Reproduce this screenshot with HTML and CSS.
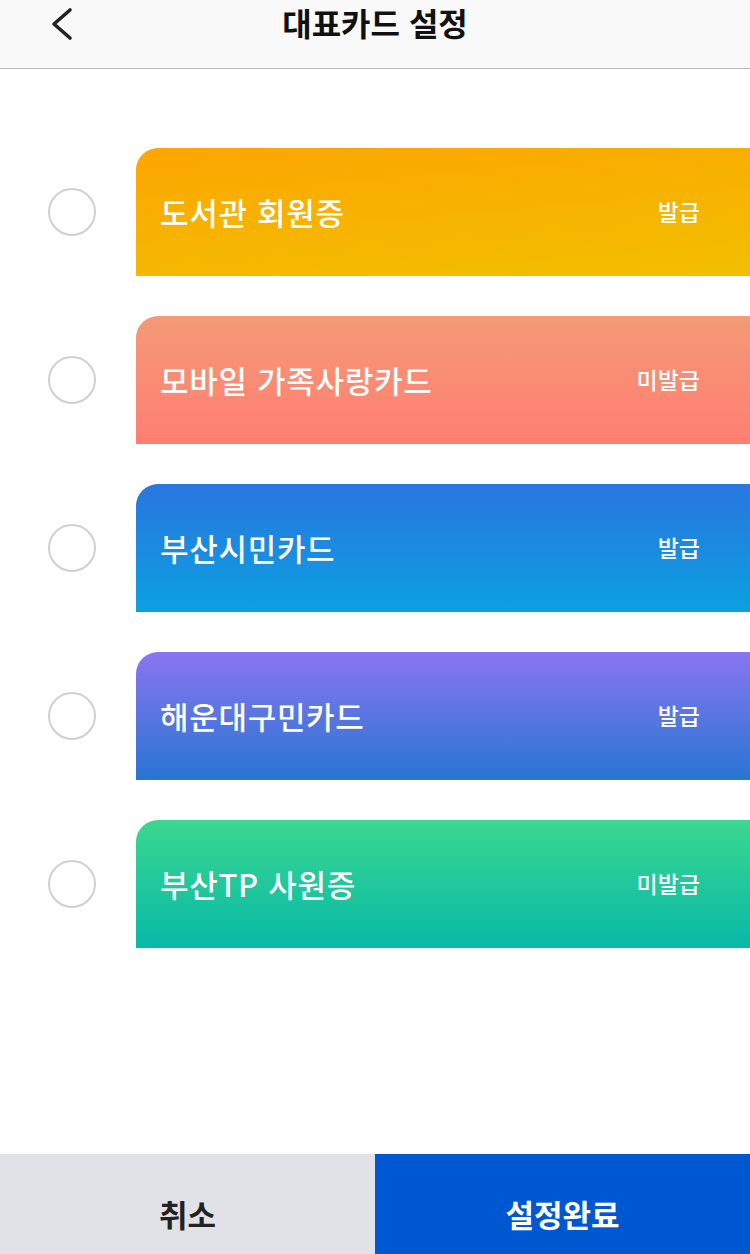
FILE: index.html
```html
<!DOCTYPE html>
<html lang="ko">
<head>
<meta charset="utf-8">
<link rel="stylesheet" href="styles.css">
</head>
<body>
<div class="page">
  <header class="header">
    <button class="back" aria-label="뒤로">
      <svg width="24" height="34" viewBox="0 0 24 34"><path d="M19 3 L3 17 L19 31" fill="none" stroke="#222" stroke-width="3.6" stroke-linecap="round" stroke-linejoin="round"/></svg>
    </button>
    <h1 class="title">대표카드 설정</h1>
  </header>
  <main class="list">
    <div class="row">
      <span class="radio"></span>
      <div class="card c1"><span class="name">도서관 회원증</span><span class="status">발급</span></div>
    </div>
    <div class="row">
      <span class="radio"></span>
      <div class="card c2"><span class="name">모바일 가족사랑카드</span><span class="status">미발급</span></div>
    </div>
    <div class="row">
      <span class="radio"></span>
      <div class="card c3"><span class="name">부산시민카드</span><span class="status">발급</span></div>
    </div>
    <div class="row">
      <span class="radio"></span>
      <div class="card c4"><span class="name">해운대구민카드</span><span class="status">발급</span></div>
    </div>
    <div class="row">
      <span class="radio"></span>
      <div class="card c5"><span class="name">부산TP 사원증</span><span class="status">미발급</span></div>
    </div>
  </main>
  <footer class="footer">
    <button class="btn cancel">취소</button>
    <button class="btn done">설정완료</button>
  </footer>
</div>
</body>
</html>
```
FILE: styles.css
```css
* { box-sizing: border-box; }
html, body { margin: 0; padding: 0; }
body {
  font-family: "Noto Sans CJK KR", "Noto Sans", sans-serif;
  background: #fff;
  width: 750px;
  height: 1254px;
  overflow: hidden;
}
.page {
  display: flex;
  flex-direction: column;
  height: 1254px;
}
.header {
  height: 69px;
  background: #f9f9f9;
  border-bottom: 1px solid #b9b9b9;
  display: flex;
  align-items: flex-start;
  justify-content: center;
  position: relative;
}
.back {
  position: absolute;
  left: 51px;
  top: 7px;
  border: 0;
  background: none;
  padding: 0;
  width: 24px;
  height: 34px;
}
.back svg { display: block; }
.title {
  margin: 0;
  font-size: 32px;
  font-weight: 700;
  color: #111;
  line-height: 44px;
  letter-spacing: 0;
}
.list {
  flex: 1;
  display: flex;
  flex-direction: column;
  gap: 40px;
  padding-top: 79px;
}
.row {
  display: flex;
  align-items: center;
  height: 128px;
}
.radio {
  width: 48px;
  height: 48px;
  border: 2px solid #cfcfcf;
  border-radius: 50%;
  margin-left: 48px;
  margin-right: 40px;
  flex: none;
}
.card {
  flex: 1;
  height: 128px;
  border-top-left-radius: 22px;
  display: flex;
  align-items: center;
  justify-content: space-between;
  padding: 0 50px 2px 24px;
  color: #fff;
}
.name {
  font-size: 31px;
  font-weight: 500;
  letter-spacing: 0.7px;
}
.status {
  font-size: 23px;
  font-weight: 500;
}
.c1 { background: linear-gradient(175deg, #fca600 0%, #f2bf00 100%); }
.c2 { background: linear-gradient(180deg, #f49a76 0%, #ff7e72 100%); }
.c3 { background: linear-gradient(180deg, #2a76df 0%, #0ba0e0 100%); }
.c4 { background: linear-gradient(180deg, #8a75f1 0%, #2875d3 100%); }
.c5 { background: linear-gradient(180deg, #3ad78f 0%, #08b9a8 100%); }
.footer {
  display: flex;
  height: 100px;
}
.btn {
  flex: 1;
  border: 0;
  margin: 0;
  font-family: inherit;
  font-size: 31px;
  font-weight: 700;
  padding: 18px 0 0 0;
}
.cancel { background: #e1e2e7; color: #222; }
.done { background: #0057d2; color: #fff; }
```
